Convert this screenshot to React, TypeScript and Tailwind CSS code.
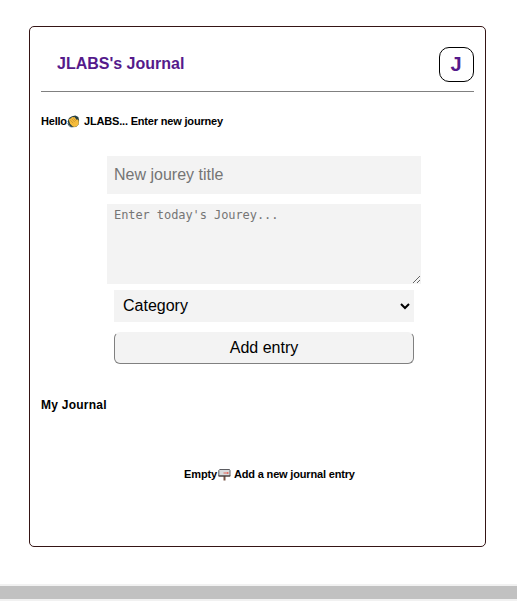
export default function App() {
  return (
    <div className="h-[601px] overflow-hidden bg-white pt-[26px] font-['Liberation_Sans',Arial,sans-serif] text-black">
      <main className="ml-[29px] h-[521px] w-[457px] rounded-[5px] border border-[#351515] px-[11px]">
        <header className="flex h-[65px] items-start justify-between border-b border-[#808080] pt-5 pl-4">
          <h1 className="pt-[5px] text-[16px] leading-6 font-bold text-[#551a8b]">JLABS's Journal</h1>
          <div className="flex h-[35px] w-[35px] items-center justify-center rounded-[10px] border border-black pr-px pb-px text-[20px] font-bold text-[#551a8b]">J</div>
        </header>
        <p className="mt-[21px] flex h-4 items-center text-[11px] font-bold whitespace-nowrap">
          <span className="w-[26px] tracking-[-0.2px]">Hello</span><Wave />
          <span className="ml-1 tracking-[-0.18px]">JLABS... Enter new journey</span>
        </p>
        <form className="mt-[27px] ml-3 flex flex-col items-center">
          <input className="h-[38px] w-[314px] bg-[#f3f3f3] px-[7.5px] text-[16px] placeholder:text-[#757575]" placeholder="New jourey title" />
          <textarea className="mt-[10px] h-[80px] w-[314px] resize bg-[#f3f3f3] px-[7.5px] py-[3px] font-['DejaVu_Sans_Mono',monospace] text-[12px] leading-4 tracking-[-0.08px] placeholder:text-[#757575]" placeholder="Enter today's Jourey..." />
          <select className="mt-[6px] h-8 w-[300px] border-r border-[#f3f3f3] bg-[#f3f3f3] pr-[5px] pb-px pl-[5.5px] text-[16px]"><option>Category</option></select>
          <button type="button" className="mt-[10px] h-8 w-[300px] rounded-[6px] border border-[#808080] border-t-[#f3f3f3] bg-[#f3f3f3] pl-px text-[16px]">Add entry</button>
        </form>
        <h2 className="mt-[33px] text-[12px] leading-4 font-bold tracking-[0.25px]">My Journal</h2>
        <p className="mt-[53px] ml-[143px] flex h-4 items-center text-[11px] font-bold whitespace-nowrap">
          <span className="w-[34px] tracking-[-0.1px]">Empty</span><Mailbox />
          <span className="ml-[3px] tracking-[-0.17px]">Add a new journal entry</span>
        </p>
      </main>
      <footer className="mt-[37px] h-[17px] border-y-2 border-[#f1f1f1] bg-[#c1c1c1]" />
    </div>
  );
}

function Wave() {
  return (
    <svg width="13" height="13" viewBox="0 0 13 13" fill="none" strokeLinecap="round" strokeLinejoin="round">
      <path d="M2 3L5 1.3 8.3.5l3 1.5.8 3-.5 4.5L9 12l-4 .3L1.8 10 .7 6.5z" fill="#263f45" />
      <path d="M1.7 4.5L3 3.4l.8.2L5 2l1.2.3L7.5 2l2.3 3 1-.8.8 1.3.2 3.2-1.5 2.4-2.3 1-2.3-.6L3 8.7z" fill="#f6bd3c" />
      <path d="M3.4 5.2l2.5 2.7M4.9 4l2.7 2.9M6.7 3.5l2 2.3" stroke="#b47d24" strokeWidth=".55" />
      <path d="M1 8.5l.8 2L4 12" stroke="#273d43" strokeWidth=".8" />
    </svg>
  );
}

function Mailbox() {
  return (
    <svg width="13" height="13" viewBox="0 0 13 13" fill="none">
      <path d="M5.5 8h2v4.5h-2z" fill="#785546" />
      <path d="M1.7 1.5h9.8l.5 1v5.5H.8V2.5z" fill="#d9dbdd" stroke="#4c4c50" strokeWidth=".9" strokeLinejoin="round" />
      <path d="M.5 8h11.8" stroke="#4a3935" />
      <path d="M5.5 5h4.8M9.8 4v2" stroke="#e65a4b" strokeWidth=".9" />
    </svg>
  );
}
